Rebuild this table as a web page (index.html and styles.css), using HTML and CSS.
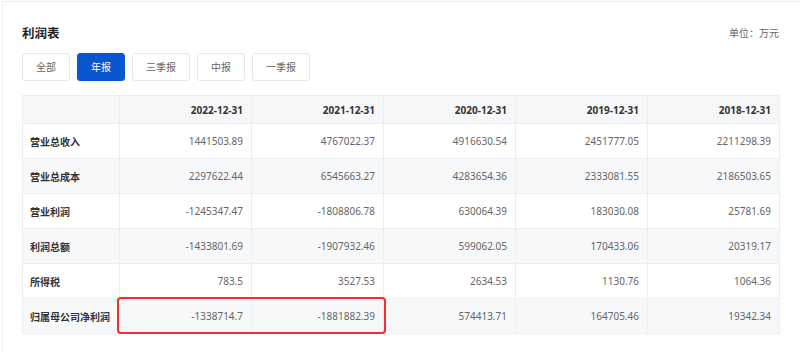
FILE: index.html
```html
<!DOCTYPE html>
<html lang="zh-CN">
<head>
<meta charset="utf-8">
<title>利润表</title>
<link rel="stylesheet" href="styles.css">
</head>
<body>
<div class="card">
  <div class="head">
    <h2 class="title">利润表</h2>
    <span class="unit">单位：万元</span>
  </div>
  <div class="tabs">
    <button class="tab">全部</button>
    <button class="tab active">年报</button>
    <button class="tab">三季报</button>
    <button class="tab">中报</button>
    <button class="tab">一季报</button>
  </div>
  <div class="table-wrap">
    <table class="grid">
      <colgroup>
        <col class="c-label">
        <col class="c-data"><col class="c-data"><col class="c-data"><col class="c-data"><col class="c-data">
      </colgroup>
      <thead>
        <tr><th></th><th>2022-12-31</th><th>2021-12-31</th><th>2020-12-31</th><th>2019-12-31</th><th>2018-12-31</th></tr>
      </thead>
      <tbody>
        <tr><td class="lbl">营业总收入</td><td>1441503.89</td><td>4767022.37</td><td>4916630.54</td><td>2451777.05</td><td>2211298.39</td></tr>
        <tr><td class="lbl">营业总成本</td><td>2297622.44</td><td>6545663.27</td><td>4283654.36</td><td>2333081.55</td><td>2186503.65</td></tr>
        <tr><td class="lbl">营业利润</td><td>-1245347.47</td><td>-1808806.78</td><td>630064.39</td><td>183030.08</td><td>25781.69</td></tr>
        <tr><td class="lbl">利润总额</td><td>-1433801.69</td><td>-1907932.46</td><td>599062.05</td><td>170433.06</td><td>20319.17</td></tr>
        <tr><td class="lbl">所得税</td><td>783.5</td><td>3527.53</td><td>2634.53</td><td>1130.76</td><td>1064.36</td></tr>
        <tr><td class="lbl">归属母公司净利润</td><td>-1338714.7</td><td>-1881882.39</td><td>574413.71</td><td>164705.46</td><td>19342.34</td></tr>
      </tbody>
    </table>
    <div class="highlight"></div>
  </div>
</div>
</body>
</html>
```

FILE: styles.css
```css
html, body {
  margin: 0;
  padding: 0;
  background: #fff;
}
body {
  font-family: "Noto Sans", "Noto Sans CJK SC", sans-serif;
  color: #333;
}
.card {
  margin: 1px 0 0 2px;
  border-top: 1px solid #eeeff1;
  border-left: 1px solid #eeeff1;
  padding: 0 21px 0 19px;
  height: 349px;
}
.head {
  display: flex;
  justify-content: space-between;
  align-items: center;
  height: 24px;
  margin-top: 18px;
}
.title {
  margin: 0;
  font-size: 12.5px;
  font-weight: 700;
  color: #222;
  font-family: "Noto Sans CJK SC", sans-serif;
}
.unit {
  font-size: 10px;
  color: #666;
  font-family: "Noto Sans CJK SC", sans-serif;
}
.tabs {
  display: flex;
  gap: 7px;
  margin-top: 9px;
}
.tab {
  height: 28px;
  padding: 0 13px;
  border: 1px solid #e4e6ea;
  border-radius: 3px;
  background: #fff;
  color: #666;
  font-size: 10px;
  font-family: "Noto Sans CJK SC", sans-serif;
  line-height: 1;
}
.tab.active {
  background: #0a55d0;
  border-color: #0a55d0;
  color: #fff;
}
.table-wrap {
  position: relative;
  margin-top: 14px;
}
.grid {
  width: 757px;
  table-layout: fixed;
  border-collapse: collapse;
  font-size: 10px;
}
.c-label { width: 97px; }
.c-data { width: 132px; }
.grid th, .grid td {
  border: 1px solid #eceef1;
  text-align: right;
  padding: 0 8px;
  white-space: nowrap;
}
.grid thead th {
  height: 27px;
  background: #f6f7f9;
  font-weight: 700;
  color: #333;
}
.grid tbody td {
  height: 34px;
  color: #666;
}
.grid tbody tr:nth-child(even) td {
  background: #f7f8fa;
}
.grid td.lbl {
  text-align: left;
  padding-left: 7px;
  font-weight: 700;
  color: #333;
  font-family: "Noto Sans CJK SC", sans-serif;
}
.highlight {
  position: absolute;
  left: 95px;
  top: 202px;
  width: 265px;
  height: 33px;
  border: 2px solid #f32e2e;
  border-radius: 4px;
  pointer-events: none;
}
```
